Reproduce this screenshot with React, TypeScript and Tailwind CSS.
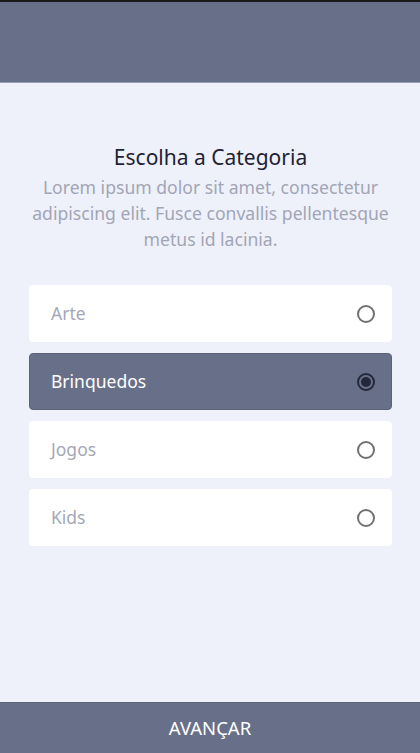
import React, { useState } from "react";

const items = ["Arte", "Brinquedos", "Jogos", "Kids"];

export default function App() {
  const [sel, setSel] = useState(1);
  return (
    <div
      className="w-[420px] h-[753px] flex flex-col bg-[#eef1f9]"
      style={{ fontFamily: '"Noto Sans", "Open Sans", sans-serif' }}
    >
      <div className="h-[2px] bg-[#1a1a1a]" />
      <div className="h-[81px] bg-[#687089] border-b border-[#9aa0b4]" />
      <div className="flex-1 flex flex-col pl-[29px] pr-[28px] pt-[60px]">
        <h1 className="text-center text-[21px] leading-[29px] text-[#1f2233]">
          Escolha a Categoria
        </h1>
        <p className="text-center text-[17.6px] leading-[26px] text-[#a2a5b7] mt-[2px]">
          Lorem ipsum dolor sit amet, consectetur adipiscing elit. Fusce convallis pellentesque metus id lacinia.
        </p>
        <div className="flex flex-col gap-[11px] mt-[33px]">
          {items.map((it, i) => {
            const active = i === sel;
            return (
              <button
                key={it}
                onClick={() => setSel(i)}
                className={
                  active
                    ? "h-[57px] rounded-[4px] bg-[#687089] border border-[#5c6379] flex items-center justify-between pl-[21px] pr-[16px]"
                    : "h-[57px] rounded-[4px] bg-white flex items-center justify-between pl-[22px] pr-[17px]"
                }
              >
                <span
                  className={
                    active
                      ? "text-[17.5px] text-white"
                      : "text-[17.5px] text-[#a4a7b8]"
                  }
                >
                  {it}
                </span>
                {active ? (
                  <span className="w-[18px] h-[18px] rounded-full border-2 border-[#23273a] flex items-center justify-center">
                    <span className="w-[10px] h-[10px] rounded-full bg-[#23273a]" />
                  </span>
                ) : (
                  <span className="w-[18px] h-[18px] rounded-full border-2 border-[#727272]" />
                )}
              </button>
            );
          })}
        </div>
      </div>
      <button className="h-[51px] bg-[#687089] border-t border-[#5c6379] text-white text-[18.5px] flex items-center justify-center">
        AVANÇAR
      </button>
    </div>
  );
}
